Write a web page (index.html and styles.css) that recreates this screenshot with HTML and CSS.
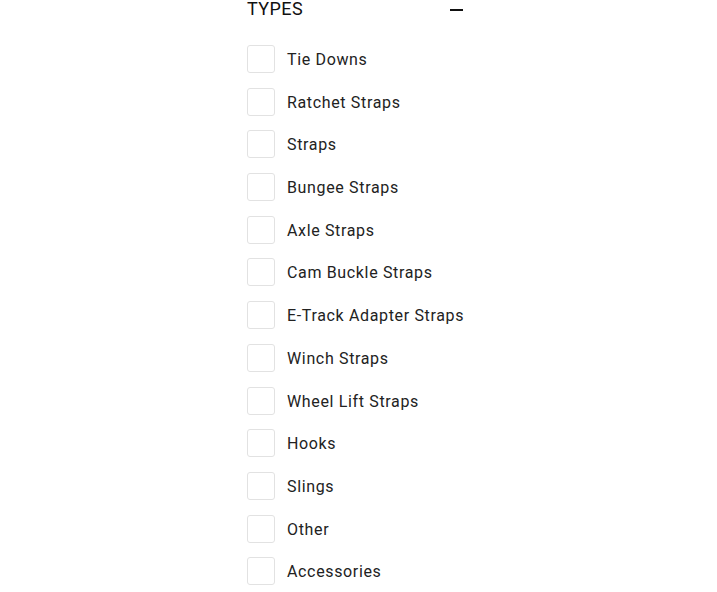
FILE: index.html
```html
<!DOCTYPE html>
<html>
<head>
<meta charset="utf-8">
<link rel="stylesheet" href="styles.css">
</head>
<body>
<div class="filter">
  <div class="filter-head">
    <span class="filter-title">TYPES</span>
    <span class="filter-toggle"></span>
  </div>
  <ul class="options">
    <li class="option"><span class="box"></span><span class="label">Tie Downs</span></li>
    <li class="option"><span class="box"></span><span class="label">Ratchet Straps</span></li>
    <li class="option"><span class="box"></span><span class="label">Straps</span></li>
    <li class="option"><span class="box"></span><span class="label">Bungee Straps</span></li>
    <li class="option"><span class="box"></span><span class="label">Axle Straps</span></li>
    <li class="option"><span class="box"></span><span class="label">Cam Buckle Straps</span></li>
    <li class="option"><span class="box"></span><span class="label">E-Track Adapter Straps</span></li>
    <li class="option"><span class="box"></span><span class="label">Winch Straps</span></li>
    <li class="option"><span class="box"></span><span class="label">Wheel Lift Straps</span></li>
    <li class="option"><span class="box"></span><span class="label">Hooks</span></li>
    <li class="option"><span class="box"></span><span class="label">Slings</span></li>
    <li class="option"><span class="box"></span><span class="label">Other</span></li>
    <li class="option"><span class="box"></span><span class="label">Accessories</span></li>
  </ul>
</div>
</body>
</html>
```
FILE: styles.css
```css
html, body {
  margin: 0;
  padding: 0;
  background: #fff;
}
.filter {
  margin-left: 247px;
  width: 217px;
  font-family: Roboto, "Liberation Sans", sans-serif;
  color: #222;
}
.filter-head {
  display: flex;
  justify-content: space-between;
  align-items: flex-start;
  height: 20px;
}
.filter-title {
  font-size: 18px;
  line-height: 18px;
  letter-spacing: 0.4px;
  color: #111;
  white-space: nowrap;
}
.filter-toggle {
  align-self: center;
  width: 13px;
  height: 2px;
  background: #111;
  margin-right: 1px;
}
.options {
  list-style: none;
  margin: 25px 0 0 0;
  padding: 0;
  display: flex;
  flex-direction: column;
  gap: 14.7px;
}
.option {
  display: flex;
  align-items: center;
  gap: 12px;
  height: 28px;
}
.box {
  box-sizing: border-box;
  width: 28px;
  height: 28px;
  border: 1px solid #e2e2e2;
  border-radius: 3px;
  flex: none;
}
.label {
  font-size: 16px;
  letter-spacing: 0.65px;
  color: #222;
  white-space: nowrap;
  padding-top: 1px;
}
```
